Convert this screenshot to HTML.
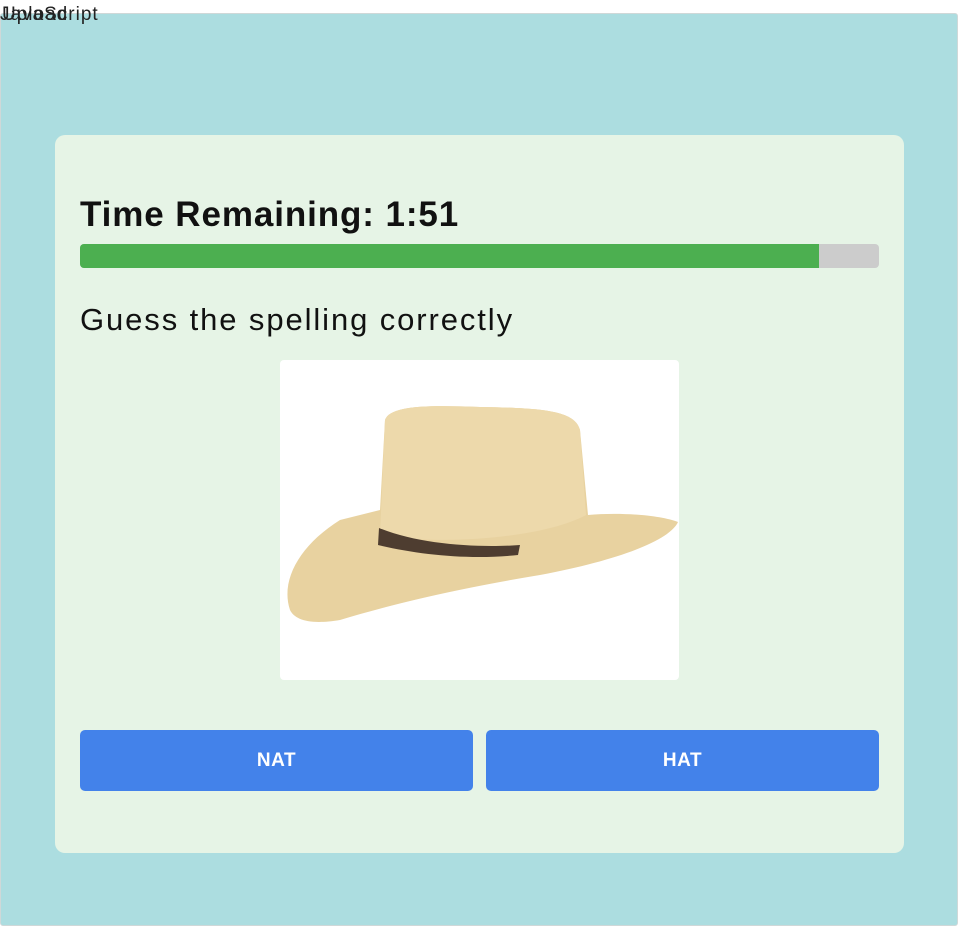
<!DOCTYPE html>
<html><head><style>
body{margin:0;width:958px;height:926px;background:#fff;font-family:"Liberation Sans",sans-serif;position:relative;overflow:hidden}
.top{position:absolute;left:0;top:4px;font-size:19px;color:#222;letter-spacing:1px}
.outer{position:absolute;left:0;top:13px;width:956px;height:911px;background:#acdde0;border:1px solid #cfd8d8;border-radius:3px}
.card{position:absolute;left:55px;top:135px;width:849px;height:718px;background:#e6f4e6;border-radius:10px}
h1{position:absolute;left:80px;top:195px;margin:0;font-size:35px;font-weight:bold;color:#111;letter-spacing:0.9px}
.bar{position:absolute;left:80px;top:244px;width:799px;height:24px;background:#ccc;border-radius:4px;overflow:hidden}
.bar div{width:739px;height:100%;background:#4caf50}
.q{position:absolute;left:80px;top:302px;font-size:31px;color:#111;letter-spacing:1.9px}
.img{position:absolute;left:280px;top:360px;width:399px;height:320px;background:#fff;border-radius:4px}
.btn{position:absolute;top:730px;width:393px;height:61px;background:#4382ea;border-radius:5px;color:#fff;font-weight:bold;font-size:19px;letter-spacing:0.5px;display:flex;align-items:center;justify-content:center}
</style></head><body>
<div class="outer"></div>
<span class="top">JavaScript</span><span class="top" style="left:2px">Upload</span>
<div class="card"></div>
<h1>Time Remaining: 1:51</h1>
<div class="bar"><div></div></div>
<div class="q">Guess the spelling correctly</div>
<div class="img">
<svg width="399" height="320" viewBox="280 360 399 320">
<path d="M290 610 C280 580 300 545 340 520 L380 510 L385 420 C390 405 430 405 480 407 C540 408 575 410 580 430 L588 515 C620 512 660 515 678 522 C670 540 620 560 540 575 C450 590 390 605 340 620 C310 625 295 620 290 610Z" fill="#e8d2a0"/>
<path d="M385 420 C390 405 430 405 480 407 C540 408 575 410 580 430 L586 515 C540 540 430 545 380 535Z" fill="#edd9ab"/>
<path d="M379 528 C420 545 480 548 520 545 L518 555 C470 560 420 555 378 545Z" fill="#4e3d30"/>
</svg>
</div>
<div class="btn" style="left:80px">NAT</div>
<div class="btn" style="left:486px">HAT</div>
</body></html>
